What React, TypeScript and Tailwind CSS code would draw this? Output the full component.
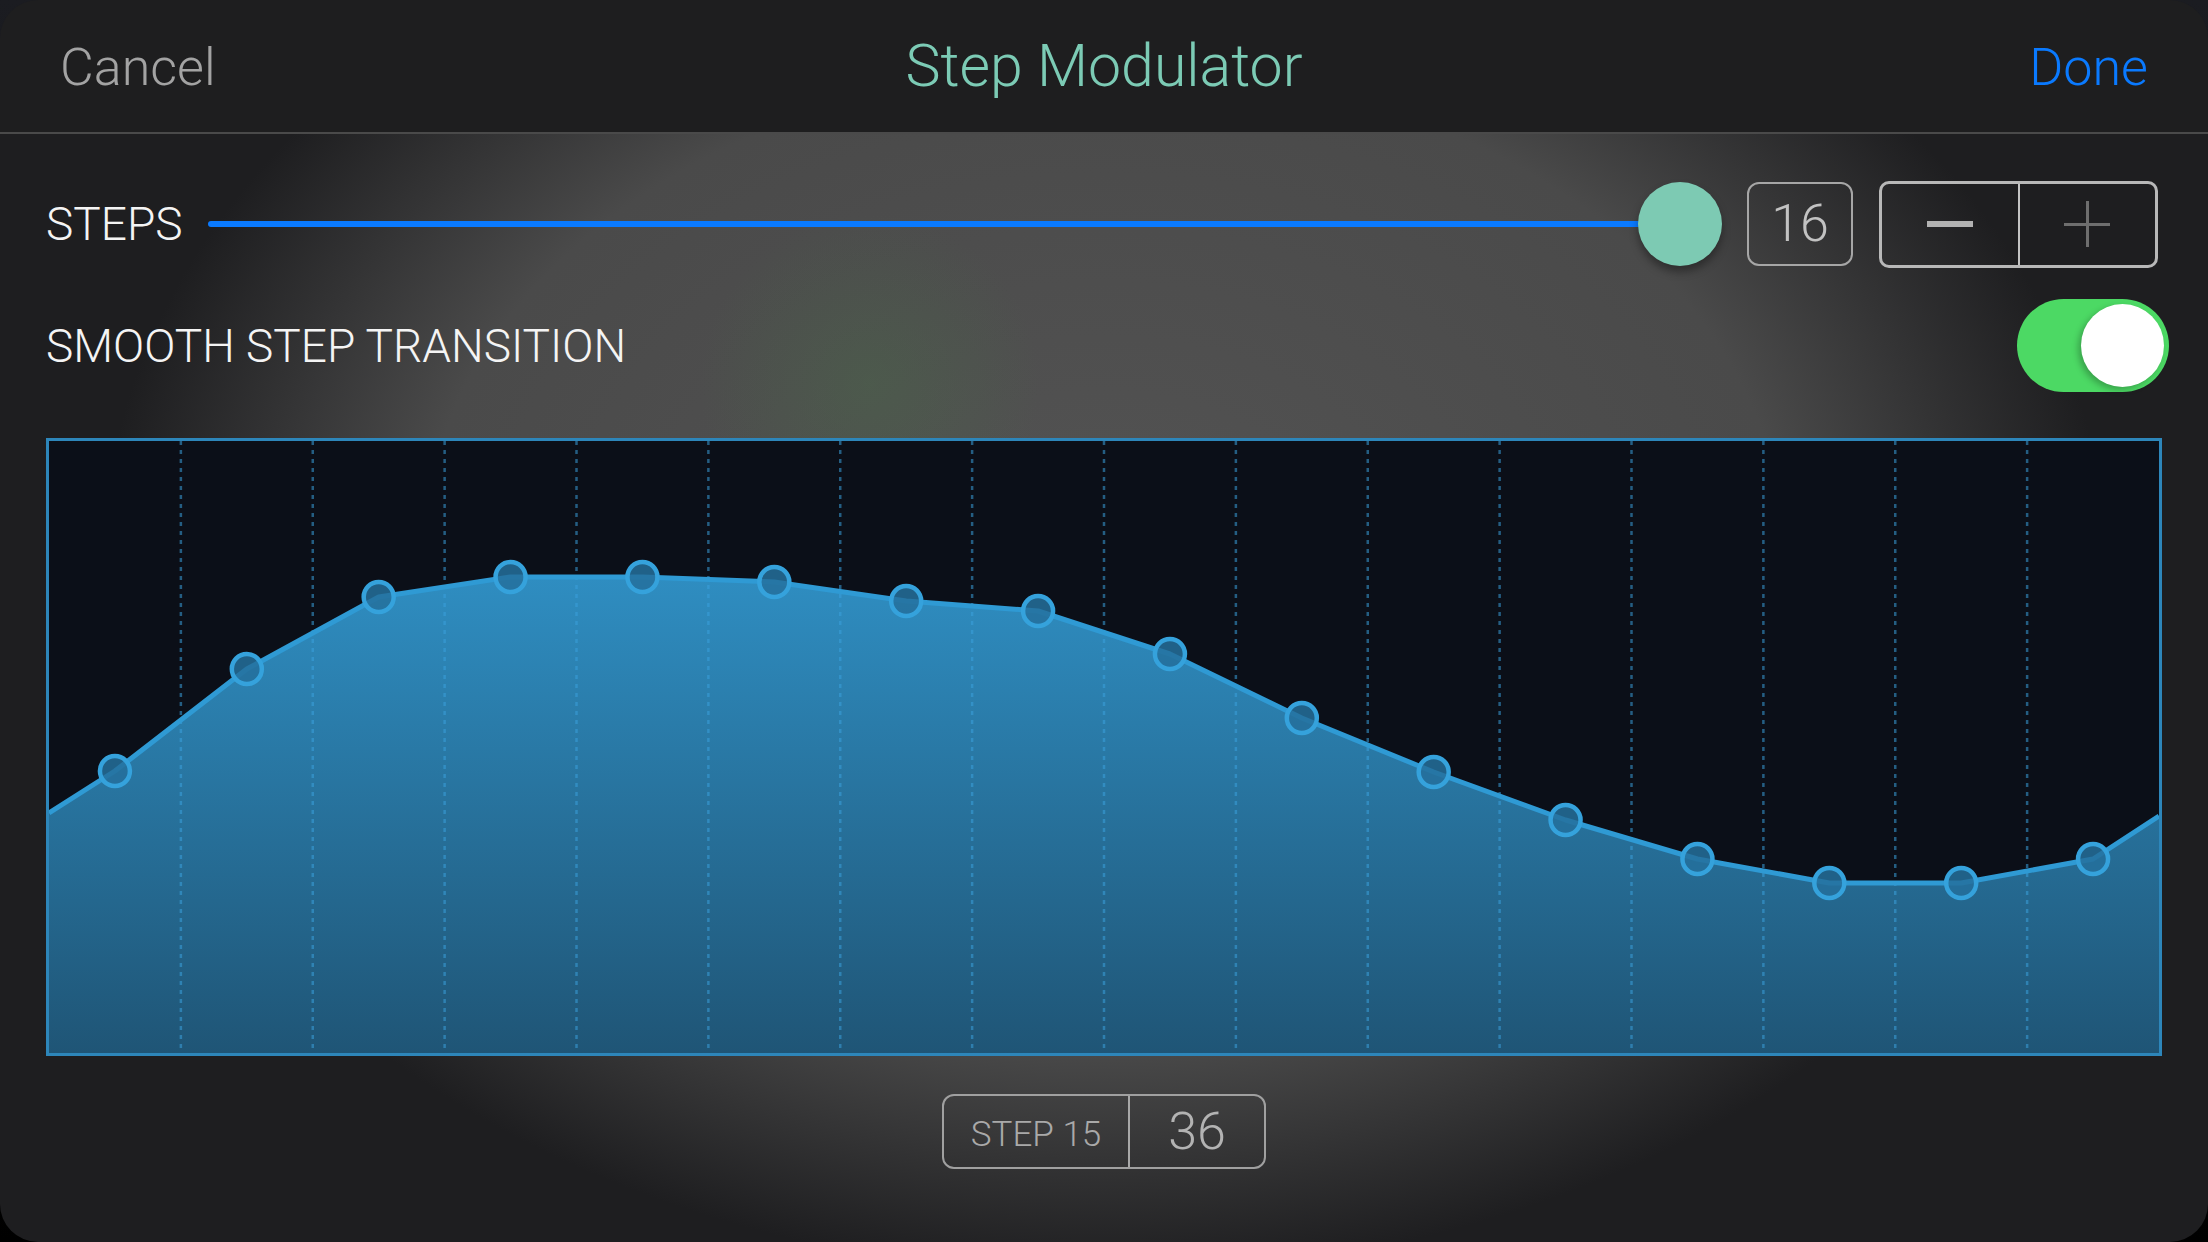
import React from "react";

const FONT = { fontFamily: "Roboto, 'Liberation Sans', sans-serif" };

// step values in chart pixels (inner box 2110 x 612)
const STEP_Y = [330, 228, 156, 136, 136, 141, 160, 170, 213, 277, 331, 379, 418, 442, 442, 418];
const W = 2110;
const H = 612;
const COL = W / 16;

function StepChart() {
  const pts = STEP_Y.map((y, i) => [COL * (i + 0.5), y] as const);
  const line = [[0, 372] as const, ...pts, [W, 375] as const];
  const d = line.map(([x, y], i) => `${i ? "L" : "M"}${x.toFixed(1)} ${y}`).join(" ");

  return (
    <div className="h-[618px] w-full border-[3px] border-[#2d86ba] bg-[#0b0f18]">
      <svg viewBox={`0 0 ${W} ${H}`} width="100%" height="100%" preserveAspectRatio="none" className="block">
        <defs>
          <linearGradient id="fill" x1="0" y1="130" x2="0" y2={H} gradientUnits="userSpaceOnUse">
            <stop offset="0" stopColor="#2f8ec2" />
            <stop offset="1" stopColor="#1f5576" />
          </linearGradient>
        </defs>
        <path d={`${d} L${W} ${H} L0 ${H} Z`} fill="url(#fill)" />
        {Array.from({ length: 15 }, (_, k) => (
          <line
            key={k}
            x1={COL * (k + 1)}
            x2={COL * (k + 1)}
            y1={0}
            y2={H}
            stroke="#3aa0dc"
            strokeOpacity={0.55}
            strokeWidth={2.5}
            strokeDasharray="4 5"
          />
        ))}
        <path d={d} fill="none" stroke="#2f9ad4" strokeWidth={5} strokeLinejoin="round" />
        {pts.map(([x, y], i) => (
          <circle key={i} cx={x} cy={y} r={15} fill="#24709c" fillOpacity={0.85} stroke="#35a2dc" strokeWidth={4.5} />
        ))}
      </svg>
    </div>
  );
}

export default function App() {
  return (
    <div className="h-[1242px] w-[2208px] bg-[linear-gradient(#1b1c21,#000)]" style={FONT}>
      <div className="flex h-full w-full flex-col overflow-hidden rounded-[38px]">
        <header className="flex h-[134px] shrink-0 items-center justify-between border-b-2 border-[#4a4a4a] bg-[#1e1e1f] px-[60px] pt-[3px]">
          <button className="w-[200px] text-left text-[52px] leading-none font-light text-[#a3a3a3]">Cancel</button>
          <h1 className="-mt-[4px] text-[59px] leading-none font-light text-[#7ccbb5]">Step Modulator</h1>
          <button className="w-[200px] text-right text-[52px] leading-none font-light text-[#0a7aff]">Done</button>
        </header>

        <main className="flex flex-1 flex-col bg-[radial-gradient(circle_170px_at_870px_250px,rgba(72,110,72,0.35),transparent),radial-gradient(ellipse_1000px_720px_at_50%_38%,#535353_0%,#4a4a4a_68%,#1e1e20_100%)] px-[46px] pt-[46px]">
          <div className="flex h-[88px] items-center">
            <span className="w-[162px] shrink-0 text-[46px] leading-none font-light text-[#f4f4f4]">STEPS</span>
            <div className="relative flex flex-1 items-center">
              <div className="h-[6px] flex-1 rounded-full bg-[#0a7aff]" />
              <div className="-ml-[4px] h-[84px] w-[84px] shrink-0 rounded-full bg-[#7dcab3] shadow-[0_6px_8px_rgba(0,0,0,0.35)]" />
            </div>
            <div className="ml-[25px] flex h-[84px] w-[106px] shrink-0 items-center justify-center rounded-[12px] border-2 border-[#a6a6a6] text-[52px] leading-none font-light text-[#c2c2c2]">
              16
            </div>
            <div className="mr-[4px] ml-[26px] flex h-[87px] w-[279px] shrink-0 rounded-[10px] border-[3px] border-[#b8b8b8]">
              <div className="flex flex-1 items-center justify-center border-r-2 border-[#c4c4c4]">
                <div className="h-[6px] w-[46px] bg-[#b2b2b2]" />
              </div>
              <div className="relative flex flex-1 items-center justify-center">
                <div className="h-[3px] w-[46px] bg-[#6e6e6e]" />
                <div className="absolute h-[46px] w-[3px] bg-[#6e6e6e]" />
              </div>
            </div>
          </div>

          <div className="mt-[31px] flex h-[93px] items-center justify-between">
            <span className="text-[46px] leading-none font-light text-[#f4f4f4]">SMOOTH STEP TRANSITION</span>
            <div className="-mr-[7px] flex h-[93px] w-[152px] items-center justify-end rounded-full bg-[#4cd964] p-[5px]">
              <div className="h-[83px] w-[83px] rounded-full bg-white shadow-[-3px_3px_6px_rgba(0,0,0,0.25)]" />
            </div>
          </div>

          <div className="mt-[46px]">
            <StepChart />
          </div>

          <div className="mt-[38px] flex justify-center">
            <div className="flex h-[75px] w-[324px] rounded-[12px] border-2 border-[#a0a0a0]">
              <div className="flex w-[186px] items-center justify-center border-r-2 border-[#a8a8a8] pt-[6px] text-[35px] leading-none font-light text-[#a9a9a9]">
                STEP 15
              </div>
              <div className="flex flex-1 items-center justify-center text-[52px] leading-none font-light text-[#b3b3b3]">
                36
              </div>
            </div>
          </div>
        </main>
      </div>
    </div>
  );
}
